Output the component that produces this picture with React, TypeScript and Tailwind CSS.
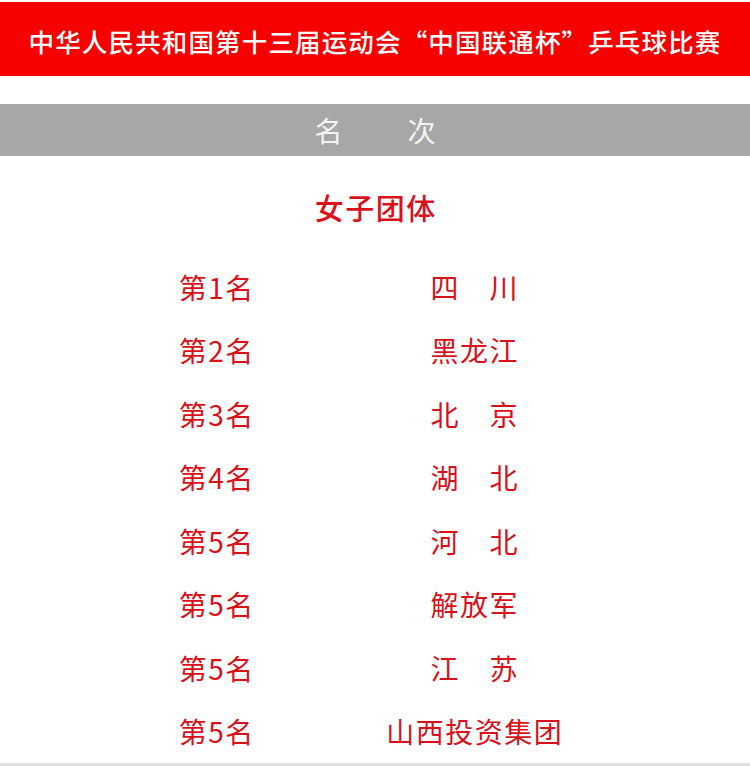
const rows = [
  { rank: "第1名", team: "四　川" },
  { rank: "第2名", team: "黑龙江" },
  { rank: "第3名", team: "北　京" },
  { rank: "第4名", team: "湖　北" },
  { rank: "第5名", team: "河　北" },
  { rank: "第5名", team: "解放军" },
  { rank: "第5名", team: "江　苏" },
  { rank: "第5名", team: "山西投资集团" },
];

export default function App() {
  return (
    <div
      className="w-[750px] h-[766px] overflow-hidden bg-white pt-[2px]"
      style={{ fontFamily: '"Noto Sans CJK SC", "Noto Sans", sans-serif' }}
    >
      {/* title banner */}
      <div className="h-[74px] bg-[#f60000] flex items-center justify-center pt-[3px]">
        <h1 className="text-[25.5px] font-medium text-white tracking-[1.15px] leading-none">
          中华人民共和国第十三届运动会“中国联通杯”乒乓球比赛
        </h1>
      </div>

      {/* header bar */}
      <div className="mt-[28px] h-[52px] bg-[#a7a7a7] flex items-center justify-center">
        <span className="text-[28px] text-[#f4f4f4] leading-none tracking-[3px] pl-[3px]">名　　次</span>
      </div>

      <div className="h-[99px] flex justify-center">
        <span className="mt-[33px] text-[29px] leading-[36px] font-medium text-[#d8111b] tracking-[1.5px] pl-[1.5px]">
          女子团体
        </span>
      </div>

      <div className="flex flex-col">
        {rows.map((r, idx) => (
          <div
            key={idx}
            className="h-[63.5px] flex items-center text-[28px] text-[#d8111b] leading-none tracking-[1.5px]"
          >
            <div className="ml-[136px] w-[160px] text-center pl-[1.5px]">{r.rank}</div>
            <div className="ml-[48px] w-[260px] text-center pl-[1.5px]">{r.team}</div>
          </div>
        ))}
      </div>
      <div className="h-[3px] bg-[#e2e2e2]" />
    </div>
  );
}
